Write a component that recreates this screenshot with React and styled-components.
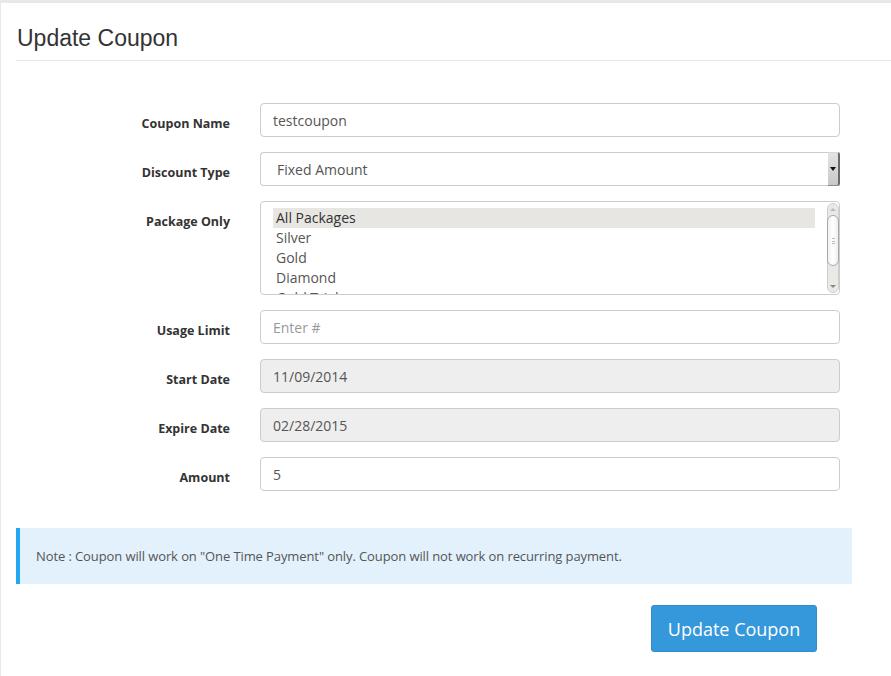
import React from 'react'
import styled, { createGlobalStyle } from 'styled-components'

const GlobalStyle = createGlobalStyle`
  html, body {
    margin: 0;
    padding: 0;
    background: #e6e6e6;
    font-family: "Open Sans", "Liberation Sans", sans-serif;
  }
`

const Page = styled.div`
  background: #e8e8e8;
  padding: 3px 0 0 1px;
  height: 676px;
  box-sizing: border-box;
`

const Panel = styled.div`
  background: #fff;
  height: 100%;
  padding-left: 15px;
  box-sizing: border-box;
`

const Header = styled.div`
  border-bottom: 1px solid #e7e7e7;
  height: 58px;
  box-sizing: border-box;
  padding-top: 22px;
`

const Title = styled.h1`
  margin: 0 0 0 1px;
  font-family: "Liberation Sans", Arial, sans-serif;
  font-weight: normal;
  font-size: 23px;
  line-height: 27px;
  color: #333;
`

const Form = styled.div`
  display: grid;
  grid-template-columns: 214px 580px;
  column-gap: 30px;
  row-gap: 15px;
  margin-top: 42px;
`

const Label = styled.label`
  text-align: right;
  font-size: 12.5px;
  font-weight: bold;
  line-height: 17px;
  padding-top: 12px;
  color: #333;
`

const Input = styled.div`
  height: 34px;
  box-sizing: border-box;
  border: 1px solid #ccc;
  border-radius: 4px;
  background: ${p => (p.disabled ? '#eeeeee' : '#fff')};
  padding: 0 12px;
  display: flex;
  align-items: center;
  font-size: 14px;
  color: ${p => (p.placeholder ? '#999' : '#555')};
`

const Select = styled(Input)`
  padding: 0 0 0 16px;
  justify-content: space-between;
  border-right: none;
  border-radius: 4px 0 0 4px;
`

const SelectArrow = styled.div`
  width: 12px;
  height: 34px;
  box-sizing: border-box;
  margin-top: -1px;
  margin-bottom: -1px;
  background: linear-gradient(#e4e4e4, #c8c8c8);
  border-right: 2px solid #6a6a6a;
  border-bottom: 1px solid #8a8a8a;
  border-top: 1px solid #d8d8d8;
  border-radius: 0 3px 3px 0;
  display: flex;
  align-items: center;
  justify-content: center;
  &::after {
    content: '';
    border-left: 3px solid transparent;
    border-right: 3px solid transparent;
    border-top: 4px solid #111;
  }
`

const ListBox = styled.div`
  height: 94px;
  box-sizing: border-box;
  border: 1px solid #ccc;
  border-radius: 4px;
  display: flex;
  overflow: hidden;
`

const Options = styled.div`
  flex: 1;
  padding: 6px 12px 0 12px;
  overflow: hidden;
`

const Option = styled.div`
  height: 20px;
  line-height: 20px;
  font-size: 14px;
  padding-left: 3px;
  white-space: nowrap;
  background: ${p => (p.selected ? '#e8e6e2' : 'transparent')};
  color: ${p => (p.selected ? '#333' : '#555')};
`

const ScrollBar = styled.div`
  width: 12px;
  margin: 1px 0 1px 0;
  border: 1px solid #cfcfcf;
  border-radius: 6px;
  background: #ebe9e6;
  display: flex;
  flex-direction: column;
  align-items: center;
  box-sizing: border-box;
`

const ScrollArrow = styled.div`
  height: 12px;
  display: flex;
  align-items: center;
  justify-content: center;
  &::after {
    content: '';
    border-left: 3px solid transparent;
    border-right: 3px solid transparent;
    ${p =>
      p.down
        ? 'border-top: 3px solid #888;'
        : 'border-bottom: 3px solid #bbb;'}
  }
`

const Thumb = styled.div`
  width: 12px;
  height: 55px;
  margin-bottom: 15px;
  box-sizing: border-box;
  border: 1px solid #a8a8a8;
  border-radius: 6px;
  background: linear-gradient(90deg, #f2f2f2, #ffffff 50%, #eeeeee);
  display: flex;
  align-items: center;
  justify-content: center;
  &::after {
    content: '';
    width: 3px;
    height: 6px;
    background: repeating-linear-gradient(#bbb 0 1px, transparent 1px 2.5px);
  }
`

const Note = styled.div`
  width: 836px;
  height: 56px;
  box-sizing: border-box;
  margin-top: 37px;
  background: #e3f1fd;
  border-left: 4px solid #22a7f0;
  padding-left: 16px;
  display: flex;
  align-items: center;
  font-size: 13px;
  letter-spacing: -0.1px;
  color: #555;
`

const Actions = styled.div`
  width: 836px;
  display: flex;
  justify-content: flex-end;
  padding-right: 35px;
  box-sizing: border-box;
  margin-top: 21px;
`

const Button = styled.button`
  font-family: "Open Sans", "Liberation Sans", sans-serif;
  font-size: 18px;
  line-height: 24px;
  padding: 0;
  width: 166px;
  height: 47px;
  white-space: nowrap;
  display: flex;
  align-items: center;
  justify-content: center;
  color: #fff;
  background: #3498db;
  border: 1px solid #2f8dcc;
  border-radius: 3px;
  cursor: pointer;
`

const packages = ['All Packages', 'Silver', 'Gold', 'Diamond', 'Gold Trial']

export default function App() {
  return (
    <>
      <GlobalStyle />
      <Page>
        <Panel>
          <Header>
            <Title>Update Coupon</Title>
          </Header>
          <Form>
            <Label>Coupon Name</Label>
            <Input>testcoupon</Input>

            <Label>Discount Type</Label>
            <Select>
              Fixed Amount
              <SelectArrow />
            </Select>

            <Label>Package Only</Label>
            <ListBox>
              <Options>
                {packages.map((p, i) => (
                  <Option key={p} selected={i === 0}>
                    {p}
                  </Option>
                ))}
              </Options>
              <ScrollBar>
                <ScrollArrow />
                <Thumb />
                <ScrollArrow down />
              </ScrollBar>
            </ListBox>

            <Label>Usage Limit</Label>
            <Input placeholder>Enter #</Input>

            <Label>Start Date</Label>
            <Input disabled>11/09/2014</Input>

            <Label>Expire Date</Label>
            <Input disabled>02/28/2015</Input>

            <Label>Amount</Label>
            <Input>5</Input>
          </Form>
          <Note>
            Note : Coupon will work on "One Time Payment" only. Coupon will not
            work on recurring payment.
          </Note>
          <Actions>
            <Button>Update Coupon</Button>
          </Actions>
        </Panel>
      </Page>
    </>
  )
}
